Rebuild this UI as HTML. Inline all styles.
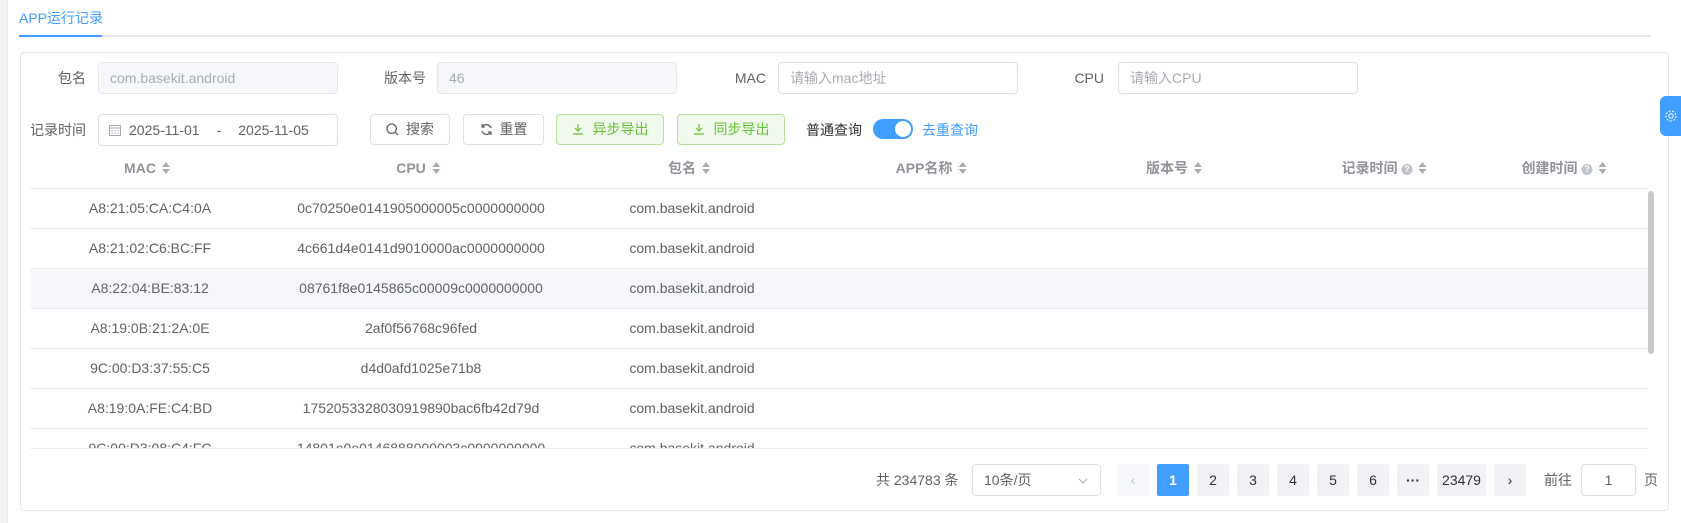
<!DOCTYPE html>
<html><head><meta charset="utf-8">
<style>
*{box-sizing:border-box;margin:0;padding:0}
body{width:1681px;height:523px;background:#fff;font-family:"Liberation Sans","Noto Sans CJK SC",sans-serif;font-size:14px;color:#606266;position:relative;overflow:hidden}
.a{position:absolute}
.strip{left:0;top:0;width:8px;height:523px;background:#f3f4f6;border-right:1px solid #e8eaee}
.tab{left:19px;top:8px;color:#409eff;font-size:14px}
.tabline{left:19px;top:35px;width:1632px;height:2px;background:#e4e7ed}
.tabact{left:19px;top:35px;width:83px;height:2px;background:#409eff}
.card{left:20px;top:52px;width:1649px;height:459px;border:1px solid #e4e7ed;border-radius:4px}
.lbl{font-size:14px;color:#606266;line-height:32px;text-align:right}
.inp{height:32px;border:1px solid #dcdfe6;border-radius:4px;line-height:30px;padding-left:11px;color:#a8abb2;font-size:14px}
.dis{background:#f5f7fa;border-color:#e4e7ed}
.btn{height:31px;border:1px solid #dcdfe6;border-radius:4px;line-height:29px;text-align:center;color:#606266;font-size:14px}
.gbtn{background:#f0f9eb;border-color:#b3e19d;color:#67c23a}
.th{top:148px;height:40px;line-height:40px;font-weight:bold;color:#909399;font-size:14px;transform:translateX(-50%);white-space:nowrap}
.sort{display:inline-block;vertical-align:middle;margin-left:6px;width:8px;height:12px;position:relative;top:-1px}
.sort:before{content:"";position:absolute;left:0;top:0;border:4px solid transparent;border-bottom:5px solid #a8abb2;border-top:0}
.sort:after{content:"";position:absolute;left:0;top:7px;border:4px solid transparent;border-top:5px solid #a8abb2;border-bottom:0}
.q{display:inline-block;width:11px;height:11px;border-radius:50%;background:#c0c4cc;color:#fff;font-size:9px;line-height:11px;text-align:center;vertical-align:middle;margin-left:4px}
.row{left:30px;width:1618px;height:40px;border-top:1px solid #ebeef5}
.cell{top:0;line-height:39px;transform:translateX(-50%);white-space:nowrap;font-size:14px;color:#606266}
.pg{top:464px;height:32px;line-height:32px;text-align:center;background:#f0f2f5;border-radius:2px;font-size:14px;color:#303133;width:32px}
</style></head><body>
<div class="a strip"></div>
<div class="a tab">APP运行记录</div>
<div class="a tabline"></div><div class="a tabact"></div>
<div class="a card"></div>

<div class="a lbl" style="left:40px;top:62px;width:46px">包名</div>
<div class="a inp dis" style="left:98px;top:62px;width:240px">com.basekit.android</div>
<div class="a lbl" style="left:370px;top:62px;width:56px">版本号</div>
<div class="a inp dis" style="left:437px;top:62px;width:240px">46</div>
<div class="a lbl" style="left:720px;top:62px;width:46px">MAC</div>
<div class="a inp" style="left:778px;top:62px;width:240px">请输入mac地址</div>
<div class="a lbl" style="left:1060px;top:62px;width:44px">CPU</div>
<div class="a inp" style="left:1118px;top:62px;width:240px">请输入CPU</div>

<div class="a lbl" style="left:28px;top:114px;width:58px">记录时间</div>
<div class="a inp" style="left:98px;top:114px;width:240px;color:#606266;padding-left:10px">
<svg width="12" height="12" viewBox="0 0 12 12" style="vertical-align:-1px;margin-right:8px"><rect x="0.5" y="1.5" width="11" height="10" fill="none" stroke="#a8abb2"/><line x1="0.5" y1="4" x2="11.5" y2="4" stroke="#a8abb2"/><g fill="#a8abb2"><rect x="2.5" y="6" width="1.2" height="1.2"/><rect x="5.5" y="6" width="1.2" height="1.2"/><rect x="8.5" y="6" width="1.2" height="1.2"/><rect x="2.5" y="8.5" width="1.2" height="1.2"/><rect x="5.5" y="8.5" width="1.2" height="1.2"/><rect x="8.5" y="8.5" width="1.2" height="1.2"/></g></svg>2025-11-01<span style="margin:0 17px 0 17px">-</span>2025-11-05</div>
<div class="a btn" style="left:370px;top:114px;width:80px"><svg width="13" height="13" viewBox="0 0 13 13" style="vertical-align:-2px;margin-right:7px"><circle cx="5.7" cy="5.7" r="4.7" fill="none" stroke="#606266" stroke-width="1.3"/><line x1="9.2" y1="9.2" x2="12" y2="12" stroke="#606266" stroke-width="1.3"/></svg>搜索</div>
<div class="a btn" style="left:463px;top:114px;width:81px"><svg width="13" height="13" viewBox="0 0 13 13" style="vertical-align:-2px;margin-right:7px"><path d="M11 5A5 5 0 0 0 2.3 3.6M2 8A5 5 0 0 0 10.7 9.4" fill="none" stroke="#606266" stroke-width="1.3"/><path d="M2 1v3h3M11 12V9H8" fill="none" stroke="#606266" stroke-width="1.2"/></svg>重置</div>
<div class="a btn gbtn" style="left:556px;top:114px;width:108px"><svg width="12" height="12" viewBox="0 0 12 12" style="vertical-align:-1px;margin-right:9px"><path d="M6 1v7M3 5l3 3 3-3M1 11h10" fill="none" stroke="#67c23a" stroke-width="1.2"/></svg>异步导出</div>
<div class="a btn gbtn" style="left:677px;top:114px;width:108px"><svg width="12" height="12" viewBox="0 0 12 12" style="vertical-align:-1px;margin-right:9px"><path d="M6 1v7M3 5l3 3 3-3M1 11h10" fill="none" stroke="#67c23a" stroke-width="1.2"/></svg>同步导出</div>
<div class="a" style="left:806px;top:119px;line-height:22px;color:#303133">普通查询</div>
<div class="a" style="left:873px;top:119px;width:40px;height:20px;border-radius:10px;background:#409eff"><div style="position:absolute;right:2px;top:2px;width:16px;height:16px;border-radius:50%;background:#fff"></div></div>
<div class="a" style="left:922px;top:119px;line-height:22px;color:#409eff">去重查询</div>

<div class="a th" style="left:147px">MAC<span class="sort"></span></div>
<div class="a th" style="left:418px">CPU<span class="sort"></span></div>
<div class="a th" style="left:689px">包名<span class="sort"></span></div>
<div class="a th" style="left:931px">APP名称<span class="sort"></span></div>
<div class="a th" style="left:1174px">版本号<span class="sort"></span></div>
<div class="a th" style="left:1384px">记录时间<span class="q">?</span><span class="sort"></span></div>
<div class="a th" style="left:1564px">创建时间<span class="q">?</span><span class="sort"></span></div>

<div class="a" style="left:30px;top:188px;width:1618px;height:260px;overflow:hidden">
<div class="a row" style="left:0;top:0"><div class="a cell" style="left:120px">A8:21:05:CA:C4:0A</div><div class="a cell" style="left:391px">0c70250e0141905000005c0000000000</div><div class="a cell" style="left:662px">com.basekit.android</div></div>
<div class="a row" style="left:0;top:40px"><div class="a cell" style="left:120px">A8:21:02:C6:BC:FF</div><div class="a cell" style="left:391px">4c661d4e0141d9010000ac0000000000</div><div class="a cell" style="left:662px">com.basekit.android</div></div>
<div class="a row" style="left:0;top:80px;background:#f5f7fa"><div class="a cell" style="left:120px">A8:22:04:BE:83:12</div><div class="a cell" style="left:391px">08761f8e0145865c00009c0000000000</div><div class="a cell" style="left:662px">com.basekit.android</div></div>
<div class="a row" style="left:0;top:120px"><div class="a cell" style="left:120px">A8:19:0B:21:2A:0E</div><div class="a cell" style="left:391px">2af0f56768c96fed</div><div class="a cell" style="left:662px">com.basekit.android</div></div>
<div class="a row" style="left:0;top:160px"><div class="a cell" style="left:120px">9C:00:D3:37:55:C5</div><div class="a cell" style="left:391px">d4d0afd1025e71b8</div><div class="a cell" style="left:662px">com.basekit.android</div></div>
<div class="a row" style="left:0;top:200px"><div class="a cell" style="left:120px">A8:19:0A:FE:C4:BD</div><div class="a cell" style="left:391px">1752053328030919890bac6fb42d79d</div><div class="a cell" style="left:662px">com.basekit.android</div></div>
<div class="a row" style="left:0;top:240px"><div class="a cell" style="left:120px">9C:00:D3:08:C4:FC</div><div class="a cell" style="left:391px">14801e0e0146888000003c0000000000</div><div class="a cell" style="left:662px">com.basekit.android</div></div>
</div>
<div class="a" style="left:30px;top:448px;width:1618px;height:1px;background:#ebeef5"></div>
<div class="a" style="left:1648px;top:191px;width:6px;height:163px;border-radius:3px;background:#c7c9cc"></div>

<div class="a" style="left:1660px;top:96px;width:21px;height:40px;background:#409eff;border-radius:6px 0 0 6px"><svg width="14" height="14" viewBox="0 0 14 14" style="position:absolute;left:4px;top:13px"><circle cx="7" cy="7" r="2.2" fill="none" stroke="#fff"/><circle cx="7" cy="7" r="5" fill="none" stroke="#fff" stroke-dasharray="2 1.5"/></svg></div>

<div class="a" style="left:876px;top:464px;line-height:32px;color:#606266">共 234783 条</div>
<div class="a inp" style="left:972px;top:464px;width:129px;color:#606266">10条/页<svg width="10" height="6" viewBox="0 0 10 6" style="position:absolute;right:12px;top:13px"><path d="M1 1l4 4 4-4" fill="none" stroke="#a8abb2"/></svg></div>
<div class="a pg" style="left:1117px;color:#c0c4cc;background:#f5f7fa">‹</div>
<div class="a pg" style="left:1157px;background:#409eff;color:#fff;font-weight:bold">1</div>
<div class="a pg" style="left:1197px">2</div>
<div class="a pg" style="left:1237px">3</div>
<div class="a pg" style="left:1277px">4</div>
<div class="a pg" style="left:1317px">5</div>
<div class="a pg" style="left:1357px">6</div>
<div class="a pg" style="left:1397px;font-weight:bold">···</div>
<div class="a pg" style="left:1437px;width:49px">23479</div>
<div class="a pg" style="left:1494px">›</div>
<div class="a" style="left:1544px;top:464px;line-height:32px">前往</div>
<div class="a inp" style="left:1581px;top:464px;width:55px;text-align:center;padding:0;color:#606266">1</div>
<div class="a" style="left:1644px;top:464px;line-height:32px">页</div>
</body></html>
